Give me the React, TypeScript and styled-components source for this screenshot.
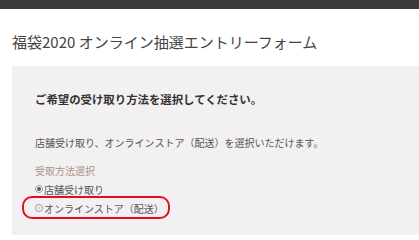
import React, { FC } from "react";
import styled, { createGlobalStyle } from "styled-components";

const GlobalStyle = createGlobalStyle`
  html, body {
    margin: 0;
    padding: 0;
    background: #fff;
    font-family: "Noto Sans CJK JP", "Liberation Sans", sans-serif;
    color: #333;
  }
`;

const TopBar = styled.div`
  height: 9px;
  background: #3b3a39;
`;

const Page = styled.div`
  padding: 0 0 0 12px;
`;

const Title = styled.h1`
  margin: 0;
  padding: 21px 0 0;
  height: 36px;
  font-size: 15px;
  font-weight: 400;
  line-height: 24px;
  color: #444;
`;

const Panel = styled.div`
  background: #f2f0f0;
  padding: 25px 0 20px 23px;
  min-height: 149px;
  box-sizing: border-box;
`;

const Lead = styled.p`
  margin: 0;
  font-size: 11.4px;
  font-weight: 700;
  line-height: 16px;
  color: #333;
`;

const Note = styled.p`
  margin: 29px 0 0;
  font-size: 10px;
  line-height: 14px;
  color: #555;
`;

const FieldLabel = styled.div`
  margin-top: 14px;
  font-size: 10px;
  line-height: 14px;
  color: #ad928c;
`;

const Options = styled.div`
  display: flex;
  flex-direction: column;
  gap: 5px;
  margin-top: 4px;
`;

const OptionRow = styled.label`
  position: relative;
  display: flex;
  align-items: center;
  height: 14px;
  font-size: 10px;
  color: #555;
  width: fit-content;
`;

const Dot = styled.span<{ $checked?: boolean }>`
  box-sizing: border-box;
  width: 8px;
  height: 8px;
  border-radius: 50%;
  border: 1px solid #999;
  background: #fff;
  margin-right: 1px;
  display: flex;
  align-items: center;
  justify-content: center;
  &::after {
    content: "";
    width: 4px;
    height: 4px;
    border-radius: 50%;
    background: ${p => (p.$checked ? "#555" : "#ddd")};
  }
`;

const Highlight = styled.span`
  position: absolute;
  left: -13px;
  right: -6px;
  top: -5px;
  bottom: -4px;
  border: 2px solid #e20f22;
  border-radius: 10px;
  pointer-events: none;
`;

interface IOption {
  label: string;
  checked?: boolean;
  marked?: boolean;
}

const options: IOption[] = [
  { label: "店舗受け取り", checked: true },
  { label: "オンラインストア（配送）", marked: true },
];

const App: FC = () => {
  return (
    <>
      <GlobalStyle />
      <TopBar />
      <Page>
        <Title>福袋2020 オンライン抽選エントリーフォーム</Title>
        <Panel>
          <Lead>ご希望の受け取り方法を選択してください。</Lead>
          <Note>店舗受け取り、オンラインストア（配送）を選択いただけます。</Note>
          <FieldLabel>受取方法選択</FieldLabel>
          <Options>
            {options.map(o => (
              <OptionRow key={o.label}>
                <Dot $checked={o.checked} />
                {o.label}
                {o.marked && <Highlight />}
              </OptionRow>
            ))}
          </Options>
        </Panel>
      </Page>
    </>
  );
};

export default App;
